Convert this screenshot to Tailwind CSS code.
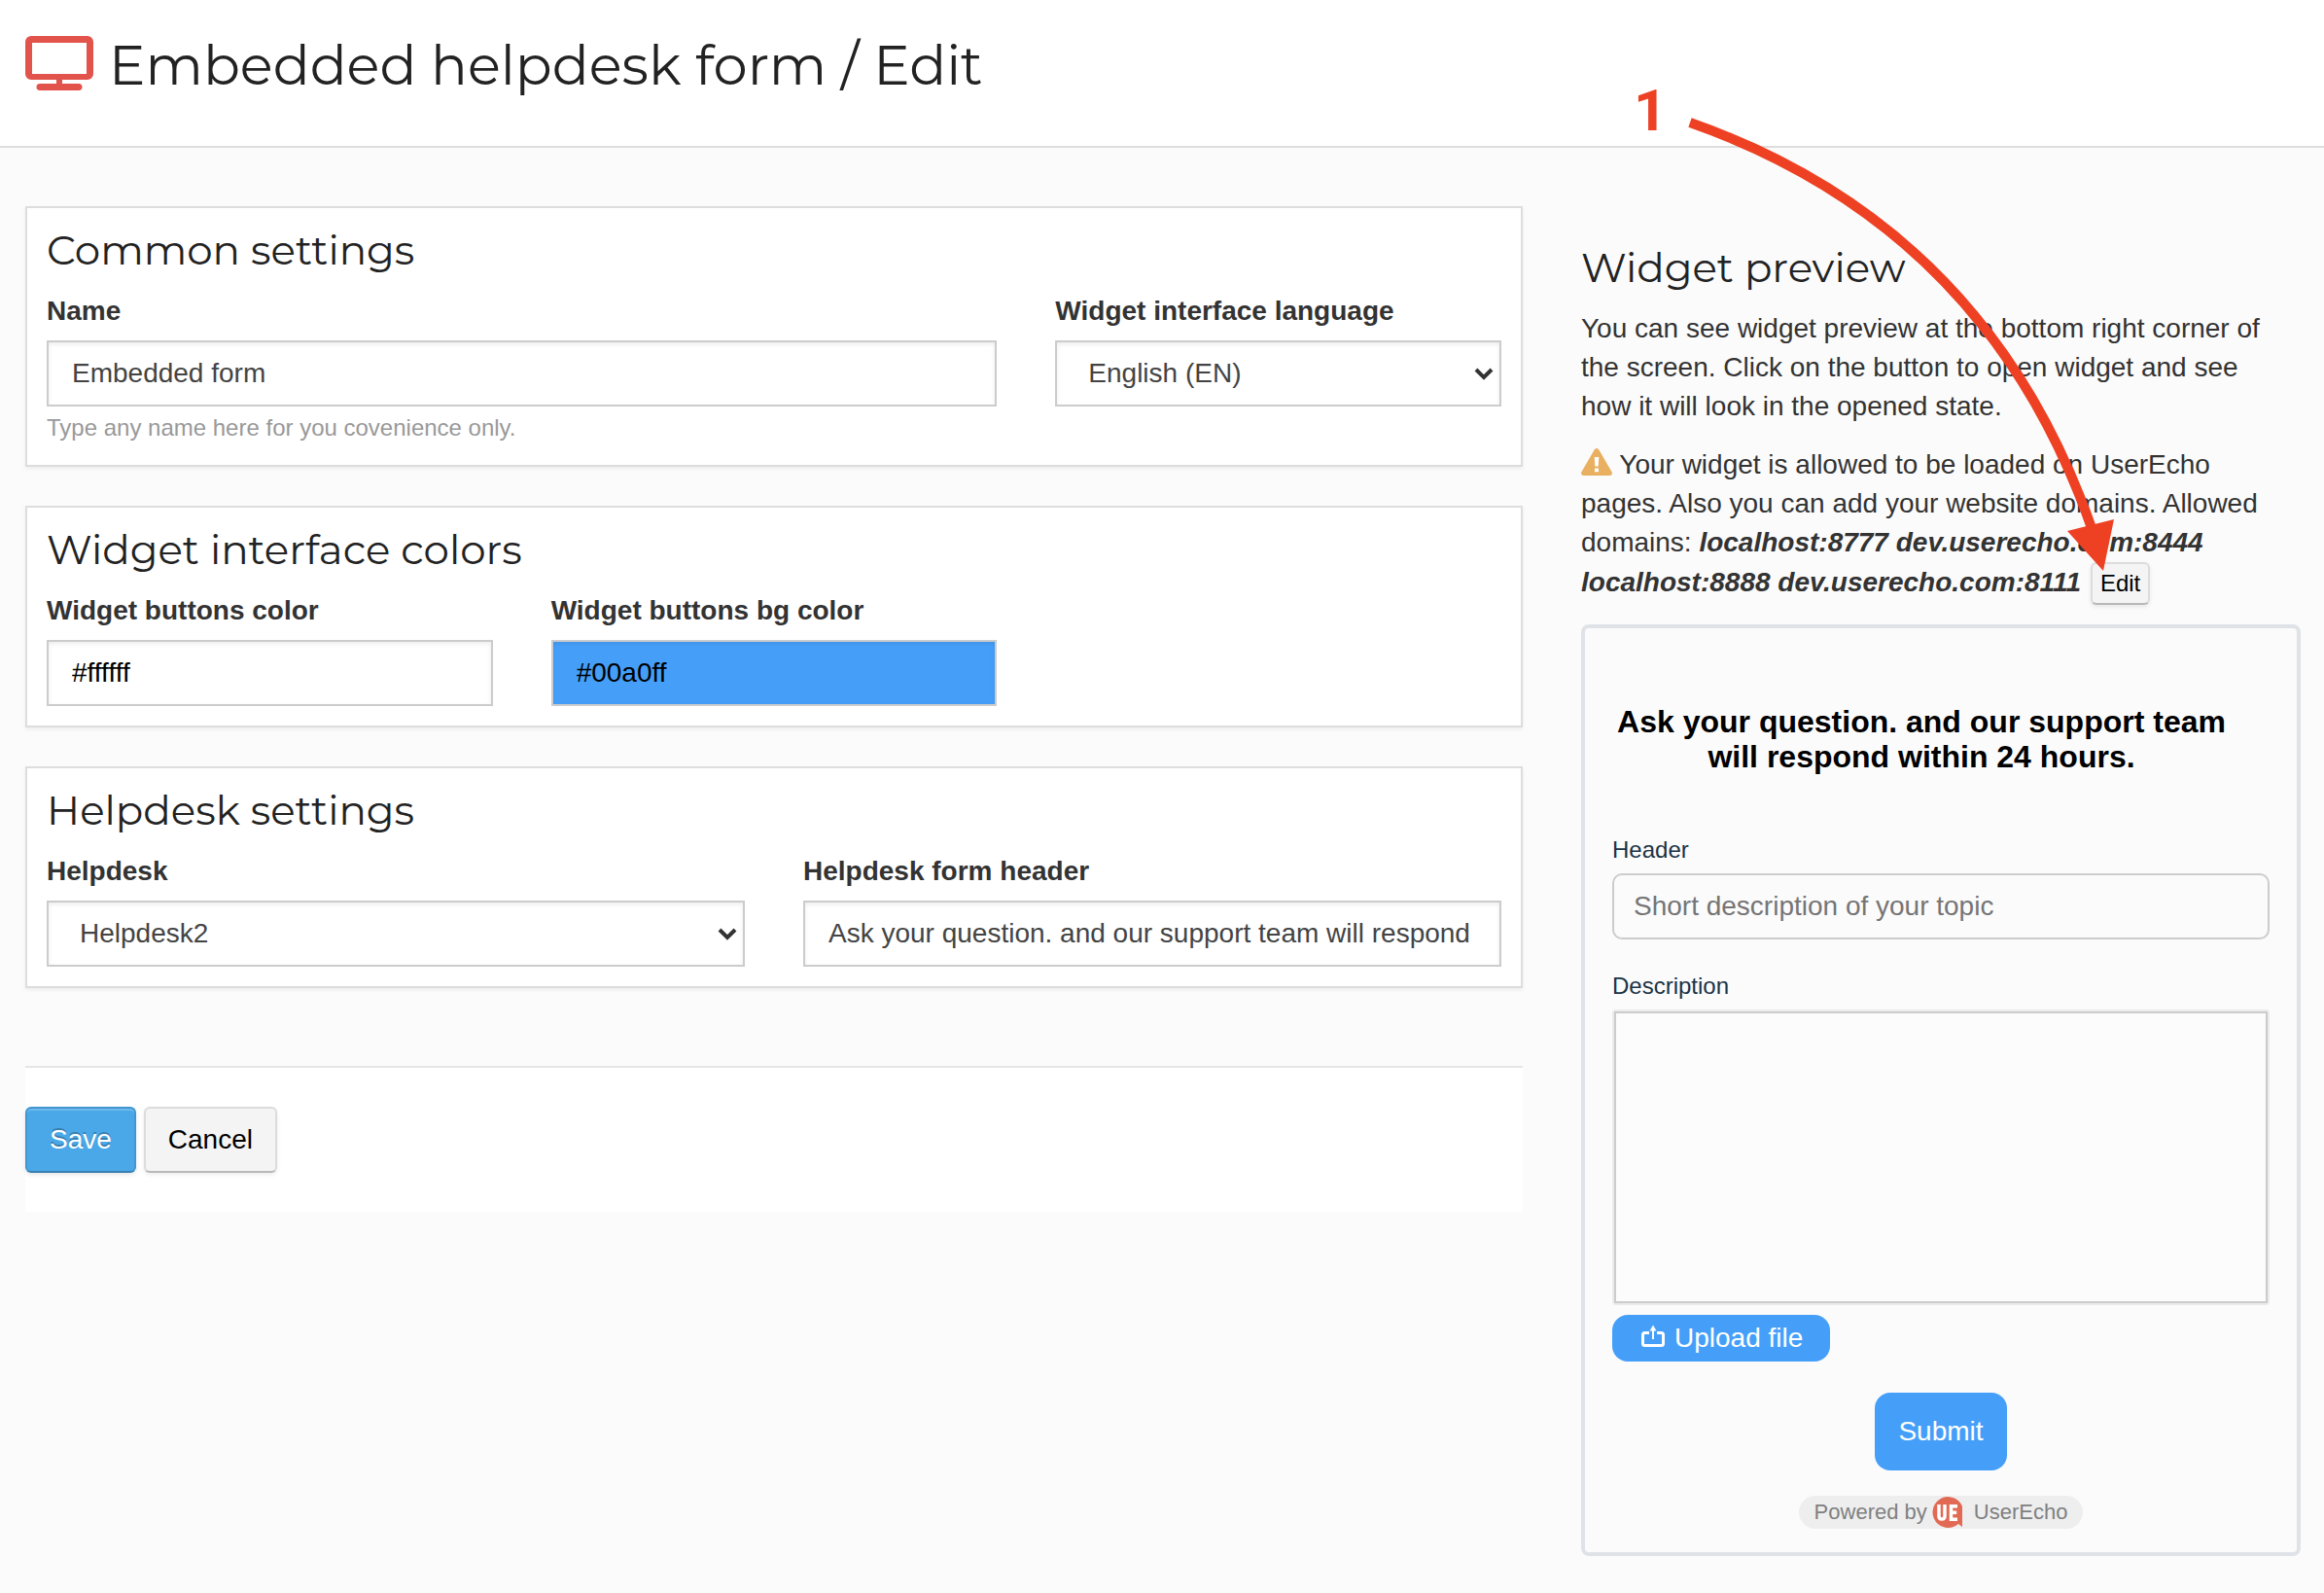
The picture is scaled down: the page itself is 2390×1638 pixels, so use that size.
<!DOCTYPE html>
<html lang="en">
<head>
  <meta charset="UTF-8" />
  <title>Embedded helpdesk form / Edit</title>
  <meta name="viewport" content="width=device-width, initial-scale=1.0" />
  <script src="https://cdn.jsdelivr.net/npm/@tailwindcss/browser@4"></script>
</head>
<body class="relative min-h-screen bg-[#fbfbfb] text-[#333] text-[28px] leading-10 font-['Liberation_Sans',Arial,sans-serif]">

  <header class="flex items-center gap-4 h-38 pl-[26px] pb-5 bg-white border-b-2 border-[#ddd]">
    <svg class="w-[70px] h-14" viewBox="0 0 70 56" fill="#e2534b" aria-hidden="true">
      <path fill-rule="evenodd" d="M6 0h58a6 6 0 0 1 6 6v33a6 6 0 0 1-6 6H38v4h17a3.5 3.5 0 0 1 0 7H15a3.5 3.5 0 0 1 0-7h17v-4H6a6 6 0 0 1-6-6V6a6 6 0 0 1 6-6zm1 7v32h56V7z" />
    </svg>
    <h1 class="mt-1 text-[56px] leading-16 text-[#222] font-['Montserrat','Inter',sans-serif]">Embedded helpdesk form / Edit</h1>
  </header>

  <main class="grid grid-cols-12 items-start gap-[60px] pt-15 pl-[26px] pr-6 pb-9">

    <!-- Settings -->
    <form class="col-span-8 flex flex-col gap-10">
      <section class="p-5 bg-white border-2 border-[#ddd] shadow-[0_2px_4px_rgba(0,0,0,0.06)]">
        <h2 class="mb-5 text-[42px] leading-[46px] text-[#222] font-['Montserrat','Inter',sans-serif]">Common settings</h2>
        <div class="grid grid-cols-12 gap-x-[60px]">
          <div class="col-span-8">
            <label for="name" class="block mb-[10px] font-bold">Name</label>
            <input id="name" type="text" value="Embedded form"
                   class="block w-full h-17 px-6 bg-white text-[#444] border-2 border-[#ccc] shadow-[inset_0_2px_4px_rgba(0,0,0,0.08)]">
            <p class="mt-1 text-2xl leading-9 text-[#999]">Type any name here for you covenience only.</p>
          </div>
          <div class="col-span-4">
            <label for="language" class="block mb-[10px] font-bold">Widget interface language</label>
            <div class="relative">
              <select id="language" class="block w-full h-17 px-8 appearance-none bg-white text-[#444] border-2 border-[#ccc] shadow-[inset_0_2px_4px_rgba(0,0,0,0.08)]">
                <option>English (EN)</option>
              </select>
              <svg class="absolute right-2 top-7 w-5 h-3.5 pointer-events-none" viewBox="0 0 20 14" fill="none" stroke="#333" stroke-width="4" aria-hidden="true"><path d="M2 2l8 8 8-8" /></svg>
            </div>
          </div>
        </div>
      </section>

      <section class="p-5 bg-white border-2 border-[#ddd] shadow-[0_2px_4px_rgba(0,0,0,0.06)]">
        <h2 class="mb-5 text-[42px] leading-[46px] text-[#222] font-['Montserrat','Inter',sans-serif]">Widget interface colors</h2>
        <div class="grid grid-cols-12 gap-x-[60px]">
          <div class="col-span-4">
            <label for="color" class="block mb-[10px] font-bold">Widget buttons color</label>
            <input id="color" type="text" value="#ffffff"
                   class="block w-full h-17 px-6 bg-white text-black border-2 border-[#ccc] shadow-[inset_0_2px_4px_rgba(0,0,0,0.08)]">
          </div>
          <div class="col-span-4">
            <label for="bg-color" class="block mb-[10px] font-bold">Widget buttons bg color</label>
            <input id="bg-color" type="text" value="#00a0ff"
                   class="block w-full h-17 px-6 bg-[#459ff9] text-black border-2 border-[#ccc] shadow-[inset_0_2px_4px_rgba(0,0,0,0.08)]">
          </div>
        </div>
      </section>

      <section class="p-5 bg-white border-2 border-[#ddd] shadow-[0_2px_4px_rgba(0,0,0,0.06)]">
        <h2 class="mb-5 text-[42px] leading-[46px] text-[#222] font-['Montserrat','Inter',sans-serif]">Helpdesk settings</h2>
        <div class="grid grid-cols-12 gap-x-[60px]">
          <div class="col-span-6">
            <label for="helpdesk" class="block mb-[10px] font-bold">Helpdesk</label>
            <div class="relative">
              <select id="helpdesk" class="block w-full h-17 px-8 appearance-none bg-white text-[#444] border-2 border-[#ccc] shadow-[inset_0_2px_4px_rgba(0,0,0,0.08)]">
                <option>Helpdesk2</option>
              </select>
              <svg class="absolute right-2 top-7 w-5 h-3.5 pointer-events-none" viewBox="0 0 20 14" fill="none" stroke="#333" stroke-width="4" aria-hidden="true"><path d="M2 2l8 8 8-8" /></svg>
            </div>
          </div>
          <div class="col-span-6">
            <label for="form-header" class="block mb-[10px] font-bold">Helpdesk form header</label>
            <input id="form-header" type="text" value="Ask your question. and our support team will respond within 24 hours."
                   class="block w-full h-17 px-6 bg-white text-[#444] border-2 border-[#ccc] shadow-[inset_0_2px_4px_rgba(0,0,0,0.08)]">
          </div>
        </div>
      </section>

      <div class="flex gap-2 mt-10 py-10 bg-white border-t-2 border-[#e5e5e5]">
        <button type="submit" class="h-17 px-[23px] rounded-md bg-[#4aa8e8] text-white border-2 border-[#4196d0] border-b-[#3780b2] shadow-[inset_0_2px_0_rgba(255,255,255,0.2),0_2px_4px_rgba(0,0,0,0.1)] [text-shadow:0_-2px_0_rgba(0,0,0,0.25)]">Save</button>
        <button type="button" class="h-17 px-[23px] rounded-md bg-[#f4f4f4] text-black border-2 border-[#dcdcdc] border-b-[#b8b8b8] shadow-[0_2px_4px_rgba(0,0,0,0.08)]">Cancel</button>
      </div>
    </form>

    <!-- Preview -->
    <aside class="col-span-4 pt-10">
      <h2 class="mb-5 text-[42px] leading-[46px] text-[#222] font-['Montserrat','Inter',sans-serif]">Widget preview</h2>
      <p class="mb-5 pr-5">You can see widget preview at the bottom right corner of the screen. Click on the button to open widget and see how it will look in the opened state.</p>
      <p class="mb-5 pr-5">
        <svg class="inline-block align-baseline w-8 h-7 -mb-0.5" viewBox="0 0 32 28" aria-hidden="true">
          <path fill="#e8b060" d="M13.8 1.3a2.5 2.5 0 0 1 4.4 0l13.4 23A2.5 2.5 0 0 1 29.4 28H2.6a2.5 2.5 0 0 1-2.2-3.7z" />
          <path fill="#fff" d="M13.7 9h4.600l-.6 9.500h-3.400zM14 20.500h4v3.700h-4z" />
        </svg>
        Your widget is allowed to be loaded on UserEcho pages. Also you can add your website domains. Allowed domains:
        <b><i>localhost:8777 dev.userecho.com:8444 localhost:8888 dev.userecho.com:8111</i></b>
        <button type="button" class="h-11 ml-0.5 px-2 rounded-md align-baseline bg-[#f4f4f4] text-black text-2xl border-2 border-[#dcdcdc] border-b-[#b8b8b8] shadow-[0_2px_4px_rgba(0,0,0,0.08)]">Edit</button>
      </p>

      <form class="flex flex-col pt-[78px] px-7 pb-6 border-4 border-[#dfe3e8] rounded-lg">
        <h3 class="mb-15 pr-10 text-center text-[32px] leading-9 font-bold text-black">Ask your question. and our support team will respond within 24 hours.</h3>
        <label for="topic" class="mb-1.5 text-2xl leading-9 text-[#1b3346]">Header</label>
        <input id="topic" type="text" placeholder="Short description of your topic"
               class="h-17 mb-[30px] px-5 rounded-[10px] border-2 border-[#ccc] placeholder:text-[#757575]">
        <label for="description" class="mb-1.5 text-2xl leading-9 text-[#1b3346]">Description</label>
        <div class="mb-[10px] p-0.5 rounded bg-[#ebebeb]">
          <textarea id="description" class="block w-full h-75 resize-none bg-[#fcfcfc] border-2 border-[#ccc]"></textarea>
        </div>
        <button type="button" class="self-start flex items-center gap-2 h-12 mb-8 px-7 rounded-2xl bg-[#459ff9] text-white">
          <svg class="w-7 h-7" viewBox="0 0 28 28" fill="none" stroke="#fff" stroke-width="3" aria-hidden="true">
            <path d="M10 8.500H5.500a2 2 0 0 0-2 2v9a2 2 0 0 0 2 2h17a2 2 0 0 0 2-2v-9a2 2 0 0 0-2-2H18" />
            <path stroke-width="2" d="M14 15V4" />
            <path fill="#fff" stroke="none" d="M14 .5l3.500 6h-7z" />
          </svg>
          Upload file
        </button>
        <button type="submit" class="self-center h-20 mb-[26px] px-6 rounded-2xl bg-[#459ff9] text-white">Submit</button>
        <a href="#" class="self-center flex items-center h-[34px] px-4 rounded-full bg-[#eee] text-[22px] text-[#808080]">
          Powered by
          <svg class="w-8 h-8 ml-1 mr-3" viewBox="0 0 32 32" aria-hidden="true">
            <path fill="#e26a55" d="M16 0c8 0 14 4 16 10v21l-4-3A16 16 0 1 1 16 0z" />
            <path fill="none" stroke="#fff" stroke-width="3.500" d="M8 8v12q0 3 3 3t3-3V8M27 9.700h-6.500v13.500H27M20 16.300h6.200" />
          </svg>
          UserEcho
        </a>
      </form>
    </aside>
  </main>

  <!-- Step marker and arrow pointing at the domains Edit button -->
  <div class="absolute top-0 right-0 w-[790px] h-[600px] pointer-events-none">
    <span class="absolute left-20 top-[84px] text-[60px] leading-[60px] font-bold text-[#ee4124] font-['Roboto',sans-serif]">1</span>
    <svg class="absolute inset-0 w-full h-full" viewBox="0 0 790 600" aria-hidden="true">
      <path d="M138 126Q443 233 551 543" fill="none" stroke="#ee4124" stroke-width="10" />
      <path d="M526 546l48-12-11 53z" fill="#ee4124" />
    </svg>
  </div>

</body>
</html>
